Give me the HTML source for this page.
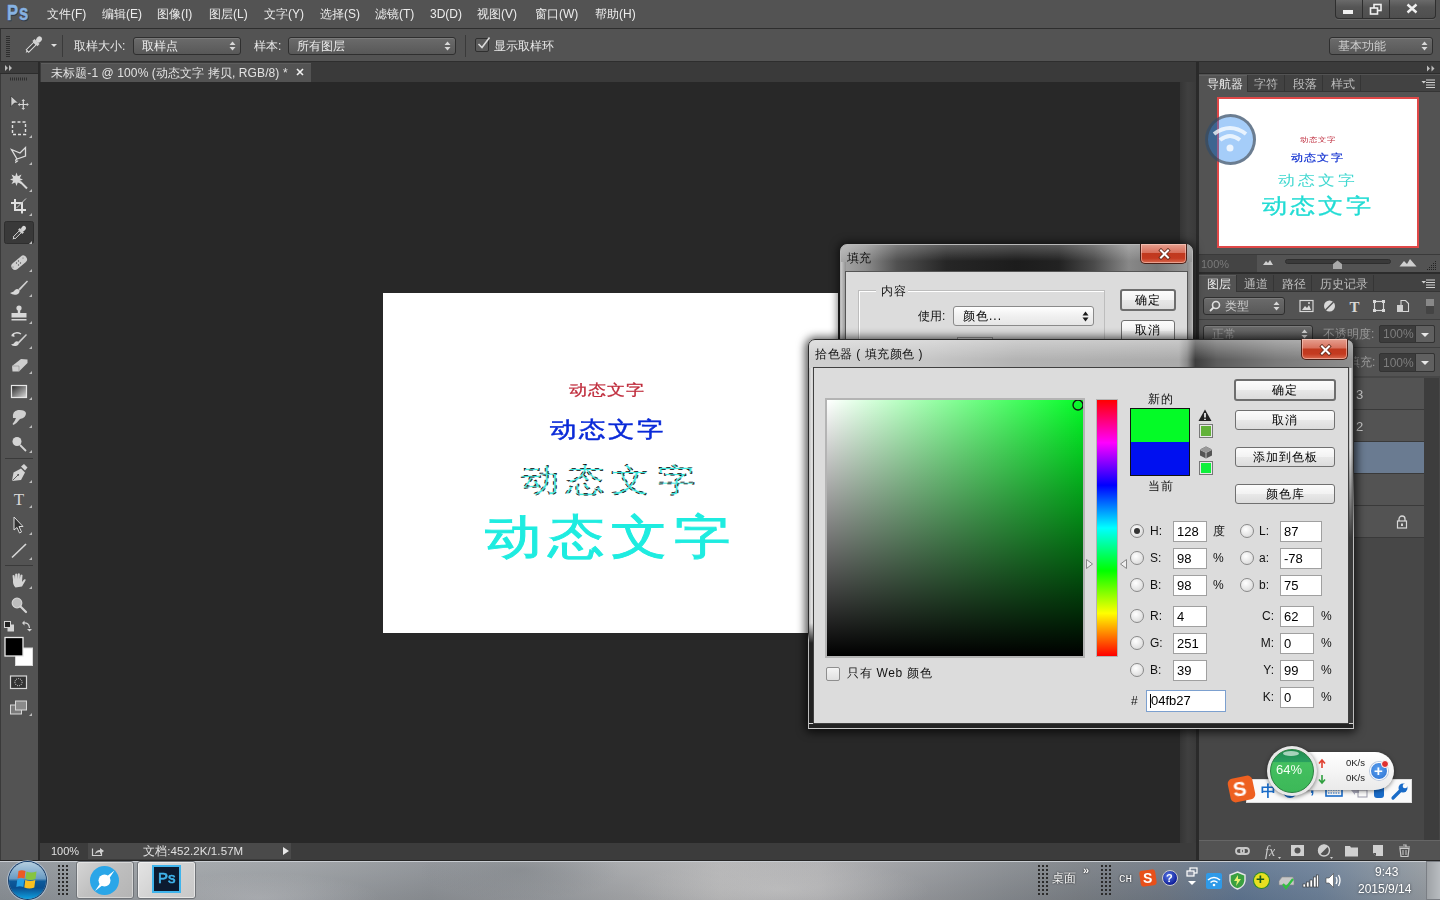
<!DOCTYPE html>
<html><head><meta charset="utf-8">
<style>
*{box-sizing:border-box;margin:0;padding:0}
html,body{width:1440px;height:900px;overflow:hidden;background:#282828;font-family:"Liberation Sans",sans-serif;font-size:12px;position:relative}
.a{position:absolute}
.t{position:absolute;white-space:nowrap;line-height:14px;will-change:transform}
span{will-change:transform}
#menubar{left:0;top:0;width:1440px;height:28px;background:#535353}
#menubar .t{color:#ececec;top:7px}
#optbar{left:0;top:28px;width:1440px;height:34px;background:#535353;border-top:1px solid #2e2e2e;border-bottom:1px solid #2e2e2e;border-left:1px solid #333}
#tools{left:0;top:62px;width:40px;height:798px;background:#535353;border-right:2px solid #2a2a2a;border-left:1px solid #3a3a3a}
#tabbar{left:40px;top:62px;width:1156px;height:20px;background:#3a3a3a}
#canvas-area{left:40px;top:82px;width:1140px;height:761px;background:#282828}
#vscroll{left:1180px;top:82px;width:16px;height:761px;background:linear-gradient(90deg,#353535,#404040 50%,#3a3a3a)}
#status{left:40px;top:843px;width:1156px;height:17px;background:#3c3c3c}
#rpanel{left:1196px;top:62px;width:244px;height:798px;background:#535353;border-left:3px solid #2a2a2a}
#taskbar{left:0;top:860px;width:1440px;height:40px;background:linear-gradient(90deg,#8a9096 0px,#9fa3a7 200px,#9a9ea2 300px,#8c9095 430px,#9a9da1 560px,#b3b3b4 720px,#aeaeb0 820px,#9a9ca0 900px,#878b90 1000px,#7a7f85 1080px,#6f7884 1160px,#5f7590 1240px,#6c8098 1320px,#8a949e 1400px,#9a9ea2 1440px)}
.dd{border:1px solid #2f2f2f;border-radius:3px;background:linear-gradient(#6b6b6b,#585858);box-shadow:inset 0 1px 0 #7a7a7a}
.dd span{position:absolute;left:8px;top:1px;color:#ececec;line-height:14px;white-space:nowrap}
.lr{left:1199px;width:225px;height:32px;background:#535353;border-bottom:1px solid #3a3a3a}
.cbtn{border:1px solid #4a2018;border-top:none;border-radius:0 0 5px 5px;background:linear-gradient(180deg,#e6a090 0%,#d8705c 45%,#c0391e 50%,#c43a20 75%,#d86a50 100%);box-shadow:inset 0 0 0 1px rgba(255,220,210,.5)}
.wbtn{border:1px solid #707070;border-radius:3px;background:linear-gradient(180deg,#fcfcfc 0%,#f2f2f2 50%,#e8e8e8 52%,#dcdcdc 100%)}
.wbtn.def{border:2px solid #6e6e6e}
.wbtn span{position:absolute;left:0;right:0;top:2px;text-align:center;color:#000;line-height:14px;font-size:12px;letter-spacing:1px}
.wdd{border:1px solid #8a8a8a;border-radius:3px;background:linear-gradient(180deg,#fff,#f0f0f0 50%,#e6e6e6)}
.wdd span{position:absolute;left:9px;top:2px;color:#000;line-height:14px;letter-spacing:1px}
.rad{width:14px;height:14px;border-radius:50%;border:1px solid #8a8a8a;background:radial-gradient(circle at 40% 35%,#fff,#e4e4e4 60%,#cfcfcf)}
.rad.on:after{content:"";position:absolute;left:3px;top:3px;width:6px;height:6px;border-radius:50%;background:#333}
.inp{border:1px solid #a0a0a0;background:#fff}
.inp span{position:absolute;left:3px;top:3px;color:#000;line-height:14px;font-size:13px}
.dots{background:linear-gradient(#333,#333) 0 0/2px 2px repeat;background-image:radial-gradient(circle at 1px 1px,#2a2a2a 1px,transparent 1.2px);background-size:4px 4px}
</style></head><body>
<div id="menubar" class="a">
  <svg class="a" style="left:0;top:0" width="40" height="28" viewBox="0 0 40 28"><g transform="translate(7,20.3) scale(0.76,1)"><text x="0.8" y="0.8" font-family="Liberation Sans" font-weight="bold" font-size="22" fill="#2c3644" letter-spacing="1.2" stroke="#2c3644" stroke-width="0.5">Ps</text><text x="0" y="0" font-family="Liberation Sans" font-weight="bold" font-size="22" fill="#86b2e2" letter-spacing="1.2" stroke="#86b2e2" stroke-width="0.5">Ps</text></g></svg>
  <div class="t" style="left:47px">文件(F)</div>
  <div class="t" style="left:102px">编辑(E)</div>
  <div class="t" style="left:157px">图像(I)</div>
  <div class="t" style="left:209px">图层(L)</div>
  <div class="t" style="left:264px">文字(Y)</div>
  <div class="t" style="left:320px">选择(S)</div>
  <div class="t" style="left:375px">滤镜(T)</div>
  <div class="t" style="left:430px">3D(D)</div>
  <div class="t" style="left:477px">视图(V)</div>
  <div class="t" style="left:535px">窗口(W)</div>
  <div class="t" style="left:595px">帮助(H)</div>
<div class="a" style="left:1335px;top:0;width:101px;height:19px;border:1px solid #2e2e2e;border-top:none;border-radius:0 0 4px 4px;background:linear-gradient(180deg,#6a6a6a,#555 40%,#4e4e4e);box-shadow:0 1px 0 #666"></div>
<div class="a" style="left:1362px;top:0;width:1px;height:18px;background:#2e2e2e"></div>
<div class="a" style="left:1389px;top:0;width:1px;height:18px;background:#2e2e2e"></div>
<div class="a" style="left:1343px;top:10px;width:10px;height:4px;background:#f0f0f0"></div>
<svg class="a" style="left:1369px;top:3px" width="14" height="13" viewBox="0 0 14 13"><rect x="5" y="1.5" width="7" height="6" fill="none" stroke="#f0f0f0" stroke-width="1.6"/><rect x="1.5" y="5" width="7" height="6" fill="#555" stroke="#f0f0f0" stroke-width="1.6"/></svg>
<svg class="a" style="left:1406px;top:3px" width="12" height="11" viewBox="0 0 12 11"><path d="M1.5 1.5 L10.5 9.5 M10.5 1.5 L1.5 9.5" stroke="#f0f0f0" stroke-width="2.4"/></svg>
</div>
<div id="optbar" class="a">
  <div class="a" style="left:5px;top:7px;width:4px;height:21px;background:repeating-linear-gradient(180deg,#2e2e2e 0 1px,transparent 1px 2px)"></div>
  <svg class="a" style="left:0;top:-28px" width="60" height="90" viewBox="0 0 60 90"><g transform="translate(32.5,44) rotate(45)"><rect x="-2.6" y="-11" width="5.2" height="6.5" rx="2.6" fill="#d6d6d6"/><rect x="-3.6" y="-5" width="7.2" height="3" fill="#cfcfcf"/><rect x="-1.7" y="-2" width="3.4" height="10.5" fill="#454545" stroke="#dcdcdc" stroke-width="1"/><path d="M-1.2 8.5 L0 11 L1.2 8.5Z" fill="#dcdcdc"/></g></svg>
  <div class="a" style="left:50px;top:15px;width:0;height:0;border-left:3px solid transparent;border-right:3px solid transparent;border-top:3px solid #e0e0e0"></div>
  <div class="a" style="left:61px;top:6px;width:1px;height:22px;background:#3a3a3a"></div>
  <div class="t" style="left:73px;top:10px;color:#e8e8e8">取样大小:</div>
  <div class="a dd" style="left:132px;top:8px;width:108px;height:18px"><span>取样点</span><svg style="position:absolute;right:4px;top:3px" width="7" height="10" viewBox="0 0 7 10"><path d="M0.5 4 L3.5 0.5 L6.5 4Z M0.5 6 L3.5 9.5 L6.5 6Z" fill="#d8d8d8"/></svg></div>
  <div class="t" style="left:253px;top:10px;color:#e8e8e8">样本:</div>
  <div class="a dd" style="left:287px;top:8px;width:168px;height:18px"><span>所有图层</span><svg style="position:absolute;right:4px;top:3px" width="7" height="10" viewBox="0 0 7 10"><path d="M0.5 4 L3.5 0.5 L6.5 4Z M0.5 6 L3.5 9.5 L6.5 6Z" fill="#d8d8d8"/></svg></div>
  <div class="a" style="left:464px;top:6px;width:1px;height:22px;background:#3a3a3a"></div>
  <div class="a" style="left:474px;top:9px;width:14px;height:14px;border:1px solid #2f2f2f;border-radius:2px;background:#5a5a5a"></div>
  <svg class="a" style="left:475px;top:7px" width="16" height="14" viewBox="0 0 16 14"><path d="M2.5 8 L6 11.5 L13.5 1.5" stroke="#dadada" stroke-width="1.6" fill="none"/></svg>
  <div class="t" style="left:493px;top:10px;color:#e8e8e8">显示取样环</div>
  <div class="a dd" style="left:1328px;top:8px;width:104px;height:18px;color:#c8c8c8"><span style="color:#cfcfcf">基本功能</span><svg style="position:absolute;right:4px;top:3px" width="7" height="10" viewBox="0 0 7 10"><path d="M0.5 4 L3.5 0.5 L6.5 4Z M0.5 6 L3.5 9.5 L6.5 6Z" fill="#d8d8d8"/></svg></div>
</div>
<div id="tools" class="a"></div>
<div class="a" style="left:0;top:62px;width:38px;height:12px;background:#3b3b3b;border-bottom:1px solid #2c2c2c"></div>
<svg class="a" style="left:0;top:0" width="40" height="860" viewBox="0 0 40 860">
<path d="M5 65 L8 68 L5 71Z M9 65 L12 68 L9 71Z" fill="#bdbdbd"/>
<path d="M10 79 h18" stroke="#2f2f2f" stroke-width="3" stroke-dasharray="1 1"/>
<rect x="4.5" y="221.5" width="29" height="22" rx="2" fill="#393939" stroke="#2e2e2e"/>
<g fill="#cfcfcf" stroke="none">
<!-- move -->
<path d="M11 96 L18.5 103 L14.5 103 L11 106.5Z" stroke="#2a2a2a" stroke-width="0.6"/>
<path d="M23.3 100 v9 M18.8 104.5 h9" stroke="#d8d8d8" stroke-width="1.2"/>
<path d="M23.3 99 l-1.8 2 h3.6Z M23.3 110 l-1.8 -2 h3.6Z M17.8 104.5 l2 -1.8 v3.6Z M28.8 104.5 l-2 -1.8 v3.6Z"/>
</g>
<!-- marquee -->
<rect x="12.5" y="122" width="13" height="12.5" fill="none" stroke="#e0e0e0" stroke-width="1.4" stroke-dasharray="3 2"/>
<!-- lasso -->
<path d="M11.5 149.5 L20 153 L25.5 147.5 L25.5 156 L17 159 Z" fill="none" stroke="#dcdcdc" stroke-width="1.3"/>
<path d="M17 159 q-2 1 -1 2 q1 1 2 -0.5 M16.5 161 L15.5 163" fill="none" stroke="#dcdcdc" stroke-width="1.2"/>
<!-- wand -->
<path d="M16.5 172.5 L17.8 176.2 L21.5 174.5 L19.8 178.3 L23 179.5 L19.8 180.7 L21.5 184 L17.8 182.5 L16.5 186 L15.2 182.5 L11.5 184 L13.2 180.7 L10 179.5 L13.2 178.3 L11.5 174.5 L15.2 176.2Z" fill="#d8d8d8"/>
<path d="M20 181.5 L27 188.5" stroke="#d8d8d8" stroke-width="2"/>
<!-- crop -->
<path d="M11 203 H22 V213.5 M15 199 V210 H26" fill="none" stroke="#e0e0e0" stroke-width="2"/>
<path d="M16.5 208 L26 198.5" stroke="#d0d0d0" stroke-width="1"/>
<!-- eyedropper --><g transform="translate(19,233) rotate(45) scale(.82)"><rect x="-2.6" y="-11" width="5.2" height="6.5" rx="2.6" fill="#d6d6d6"/><rect x="-3.6" y="-5" width="7.2" height="3" fill="#cfcfcf"/><rect x="-1.7" y="-2" width="3.4" height="10.5" fill="#454545" stroke="#dcdcdc" stroke-width="1"/><path d="M-1.2 8.5 L0 11 L1.2 8.5Z" fill="#dcdcdc"/></g><!-- healing -->
<rect x="10" y="259" width="18" height="7.5" rx="3.7" transform="rotate(-40 19 262.5)" fill="#cfcfcf"/>
<g fill="#555"><circle cx="18.5" cy="261" r=".7"/><circle cx="20.5" cy="263" r=".7"/><circle cx="16.5" cy="263" r=".7"/><circle cx="18.5" cy="265" r=".7"/><circle cx="23" cy="258" r=".5"/><circle cx="13" cy="267" r=".5"/></g>
<!-- brush -->
<path d="M18.5 289 L27 280.5 L28 281.5 L19.8 290.5Z" fill="#d0d0d0"/>
<path d="M10 293 Q14 292 15 290 Q17 288 19.5 290 Q20 293 17 294.5 Q13 295.5 10 293Z" fill="#d8d8d8"/>
<!-- stamp -->
<circle cx="19" cy="308" r="2.6" fill="#d8d8d8"/><path d="M17.8 309 h2.4 v4 h-2.4Z M11.5 313 h15 v4.5 h-15Z M11.5 319 h15 v1.5 h-15Z" fill="#d8d8d8"/>
<!-- history brush -->
<path d="M12 335 Q16 331 21 334" fill="none" stroke="#d8d8d8" stroke-width="1.4"/><path d="M11 336 L14 333 L14.5 337Z" fill="#d8d8d8"/>
<path d="M18 342 L26 334 L27 335 L19 343.5Z" fill="#d0d0d0"/><path d="M11 344.5 Q14 344 15 342 Q17 340.5 19 342.5 Q19 345 16 346 Q13 346.5 11 344.5Z" fill="#d8d8d8"/>
<!-- eraser -->
<path d="M12 366 L21 359 L27.5 359.5 L27.5 363 L19 371.5 L12.5 371.5Z" fill="#cfcfcf"/><path d="M12 366 h7 v5.5" stroke="#8a8a8a" stroke-width=".6" fill="none"/>
<!-- gradient -->
<defs><linearGradient id="gr" x1="0" x2="1" y1="0" y2="1"><stop offset="0" stop-color="#222"/><stop offset="1" stop-color="#ddd"/></linearGradient>
<linearGradient id="sw" x1="0" x2="1" y1="0" y2="1"><stop offset="0" stop-color="#9a9a9a"/><stop offset="1" stop-color="#7a7a7a"/></linearGradient></defs>
<rect x="11.5" y="385.5" width="15" height="12" fill="url(#gr)" stroke="#e6e6e6" stroke-width="1.2"/>
<!-- smudge -->
<path d="M13 418 Q12 411 18 410 Q25 409.5 26 413 Q26 418 20 419 Q17 423 13.5 425 L12.5 424 Q15 421 16 418Z" fill="#d0d0d0"/>
<!-- dodge -->
<circle cx="17" cy="441.5" r="4.5" fill="#d4d4d4"/><path d="M20 445 L26 451" stroke="#d4d4d4" stroke-width="1.8"/>
<path d="M5 458.5 H33" stroke="#3a3a3a" stroke-width="1"/>
<!-- pen -->
<path d="M12 481 L13.5 472.5 L21 468.5 L25 472.5 L21 480Z" fill="#d4d4d4"/><path d="M21 466.5 L24 464 L27.5 467.5 L25 470.5Z" fill="#d4d4d4"/><path d="M12.5 480.5 L18 475" stroke="#444" stroke-width=".8"/><circle cx="18.2" cy="474.8" r=".9" fill="#444"/>
<!-- type -->
<text x="19" y="505" font-family="Liberation Serif" font-size="17" fill="#d8d8d8" text-anchor="middle">T</text>
<!-- path select -->
<path d="M14 517 L14 530 L17 527.5 L19.5 533 L21.5 532 L19 526.5 L23 526.5Z" fill="#333" stroke="#dcdcdc" stroke-width="1"/>
<!-- line -->
<path d="M12 557.5 L26 544" stroke="#d8d8d8" stroke-width="1.6"/>
<path d="M5 565.5 H33" stroke="#3a3a3a" stroke-width="1"/>
<!-- hand -->
<path d="M13 580 L12.5 575.5 Q13.5 574.5 14.5 575.5 L15 579 L15.2 574 Q16.2 573 17.2 574 L17.4 579 L17.8 573.8 Q18.8 572.8 19.8 573.8 L19.8 579 L20.5 575 Q21.5 574 22.5 575 L22 582 Q23.5 579.5 25 579 Q26 579.5 25.5 580.5 L22 586.5 L15.5 587.5 Q12.5 585 13 580Z" fill="#d4d4d4"/>
<!-- zoom -->
<circle cx="17" cy="603" r="4.8" fill="#bdbdbd" stroke="#d4d4d4" stroke-width="1.2"/><path d="M20.5 606.5 L26 612" stroke="#d4d4d4" stroke-width="2.2" stroke-linecap="round"/>
<!-- default colors -->
<rect x="7.5" y="624.5" width="6.5" height="7" fill="#d4d4d4"/><rect x="4.5" y="621.5" width="6" height="6" fill="#222" stroke="#d4d4d4" stroke-width="1"/>
<path d="M23 623 Q29 622 29.5 628" fill="none" stroke="#d4d4d4" stroke-width="1.2"/><path d="M22 623 L24.5 620.5 L24.5 625.5Z M29.5 631.5 L27 629 L32 629Z" fill="#d4d4d4"/>
<!-- fg/bg -->
<rect x="15.5" y="648" width="17" height="17.5" fill="#fff" stroke="#d8d8d8" stroke-width="1"/>
<rect x="5" y="637.5" width="18" height="18.5" fill="#000" stroke="#e8e8e8" stroke-width="1.3"/>
<!-- quick mask -->
<rect x="10.5" y="676" width="16" height="12.5" fill="#333" stroke="#d8d8d8" stroke-width="1.2"/><circle cx="18.5" cy="682.2" r="3.6" fill="none" stroke="#e6e6e6" stroke-width="1" stroke-dasharray="1 1"/>
<!-- screen mode -->
<rect x="10.5" y="705" width="11" height="9" fill="#7a7a7a" stroke="#d8d8d8" stroke-width="1"/><rect x="15.5" y="701" width="11" height="9" fill="#8a8a8a" stroke="#d8d8d8" stroke-width="1"/>
<path d="M29 138 L32 135 L32 138Z" fill="#bdbdbd"/><path d="M29 165 L32 162 L32 165Z" fill="#bdbdbd"/><path d="M29 192 L32 189 L32 192Z" fill="#bdbdbd"/><path d="M29 216 L32 213 L32 216Z" fill="#bdbdbd"/><path d="M29 244 L32 241 L32 244Z" fill="#bdbdbd"/><path d="M29 272 L32 269 L32 272Z" fill="#bdbdbd"/><path d="M29 297 L32 294 L32 297Z" fill="#bdbdbd"/><path d="M29 324 L32 321 L32 324Z" fill="#bdbdbd"/><path d="M29 349 L32 346 L32 349Z" fill="#bdbdbd"/><path d="M29 374 L32 371 L32 374Z" fill="#bdbdbd"/><path d="M29 400 L32 397 L32 400Z" fill="#bdbdbd"/><path d="M29 428 L32 425 L32 428Z" fill="#bdbdbd"/><path d="M29 453 L32 450 L32 453Z" fill="#bdbdbd"/><path d="M29 483 L32 480 L32 483Z" fill="#bdbdbd"/><path d="M29 508 L32 505 L32 508Z" fill="#bdbdbd"/><path d="M29 535 L32 532 L32 535Z" fill="#bdbdbd"/><path d="M29 560 L32 557 L32 560Z" fill="#bdbdbd"/><path d="M29 589 L32 586 L32 589Z" fill="#bdbdbd"/><path d="M29 716 L32 713 L32 716Z" fill="#bdbdbd"/></svg>
<div id="tabbar" class="a"></div>
<div class="a" style="left:41px;top:63px;width:270px;height:19px;background:#535353;border-top:1px solid #5e5e5e"></div>
<div class="t" style="left:51px;top:66px;color:#e2e2e2;letter-spacing:0.1px">未标题-1 @ 100% (动态文字 拷贝, RGB/8) *</div>
<svg class="a" style="left:296px;top:68px" width="8" height="8" viewBox="0 0 8 8"><path d="M1 1 L7 7 M7 1 L1 7" stroke="#f0f0f0" stroke-width="1.6"/></svg>
<div id="canvas-area" class="a"></div>
<div class="a" style="left:383px;top:293px;width:455px;height:340px;background:#fff"></div>
<div class="t cj" style="left:569px;top:381px;font-size:15px;line-height:18px;letter-spacing:0.9px;color:#bf2b3b;-webkit-text-stroke:0.3px #bf2b3b;transform:scaleX(1.2);transform-origin:0 0">动态文字</div>
<div class="t cj" style="left:550px;top:418px;font-size:22px;line-height:24px;letter-spacing:2.2px;color:#0a2ad8;-webkit-text-stroke:0.5px #0a2ad8;transform:scaleX(1.2);transform-origin:0 0">动态文字</div>
<svg class="a" style="left:500px;top:450px" width="220" height="60" viewBox="0 0 220 60"><g transform="translate(21,0) scale(1.2,1)"><text x="0" y="41" font-family="Liberation Sans" font-size="31.5" font-weight="500" letter-spacing="6" fill="#3ee6dc" stroke="#fff" stroke-width="0.6">动态文字</text><text x="0" y="41" font-family="Liberation Sans" font-size="31.5" font-weight="500" letter-spacing="6" fill="none" stroke="#000" stroke-width="0.75" stroke-dasharray="3.5 3.5">动态文字</text></g></svg>
<div class="t cj" style="left:485px;top:511.5px;font-size:47px;line-height:50px;letter-spacing:5.5px;color:#1eece0;-webkit-text-stroke:0.9px #1eece0;transform:scaleX(1.2);transform-origin:0 0">动态文字</div>
<div id="vscroll" class="a"></div>
<div id="status" class="a"></div>
<div class="a" style="left:88px;top:843px;width:203px;height:16px;background:#4a4a4a"></div>
<div class="t" style="left:51px;top:844px;color:#e0e0e0;font-size:11px">100%</div>
<svg class="a" style="left:91px;top:845px" width="14" height="12" viewBox="0 0 14 12"><path d="M1.5 3.5 v7 h9 v-3" fill="none" stroke="#d0d0d0" stroke-width="1.2"/><path d="M4 9 Q5 5 9 5 V3 L13 6 L9 9 V7 Q6 7 4 9Z" fill="#d0d0d0"/></svg>
<div class="t" style="left:143px;top:844px;color:#e0e0e0;font-size:11.5px;letter-spacing:0.1px">文档:452.2K/1.57M</div>
<div class="a" style="left:283px;top:847px;width:0;height:0;border-top:4.5px solid transparent;border-bottom:4.5px solid transparent;border-left:6px solid #e8e8e8"></div>
<div id="rpanel" class="a"></div>
<div id="rpanel" class="a"></div>
<div class="a" style="left:1199px;top:62px;width:241px;height:12px;background:#3b3b3b;border-bottom:1px solid #2c2c2c"></div>
<svg class="a" style="left:1426px;top:65px" width="10" height="7" viewBox="0 0 10 7"><path d="M1 0.5 L4 3.5 L1 6.5Z M5.5 0.5 L8.5 3.5 L5.5 6.5Z" fill="#bdbdbd"/></svg>
<!-- nav tabs -->
<div class="a" style="left:1199px;top:75px;width:241px;height:17px;background:#424242;border-bottom:1px solid #353535"></div>
<div class="a" style="left:1199px;top:75px;width:48px;height:18px;background:#535353;border-top:1px solid #5f5f5f"></div>
<div class="a" style="left:1284px;top:75px;width:1px;height:17px;background:#353535"></div>
<div class="a" style="left:1322px;top:75px;width:1px;height:17px;background:#353535"></div>
<div class="a" style="left:1360px;top:75px;width:1px;height:17px;background:#353535"></div>
<div class="a" style="left:1247px;top:75px;width:1px;height:17px;background:#353535"></div>
<div class="t" style="left:1207px;top:77px;color:#ececec">导航器</div>
<div class="t" style="left:1254px;top:77px;color:#bdbdbd">字符</div>
<div class="t" style="left:1293px;top:77px;color:#bdbdbd">段落</div>
<div class="t" style="left:1331px;top:77px;color:#bdbdbd">样式</div>
<svg class="a" style="left:1421px;top:79px" width="15" height="9" viewBox="0 0 15 9"><path d="M0.5 2 H5 L2.75 4.5Z" fill="#d0d0d0"/><path d="M5 1 H14 M5 3.5 H14 M5 6 H14 M5 8.5 H14" stroke="#d0d0d0" stroke-width="1.1"/></svg>
<!-- nav preview -->
<div class="a" style="left:1217px;top:97px;width:202px;height:151px;background:#fff;border:2px solid #e04848"></div>
<div class="t cj" style="left:1299.6px;top:135.5px;font-size:6.7px;line-height:8px;letter-spacing:0.4px;color:#c03040;transform:scaleX(1.2);transform-origin:0 0">动态文字</div>
<div class="t cj" style="left:1291px;top:152px;font-size:9.8px;line-height:11px;letter-spacing:1px;color:#1030d0;-webkit-text-stroke:.2px #1030d0;transform:scaleX(1.2);transform-origin:0 0">动态文字</div>
<div class="t cj" style="left:1278px;top:171.5px;font-size:14px;line-height:16px;letter-spacing:2.6px;color:#40d8d0;transform:scaleX(1.2);transform-origin:0 0">动态文字</div>
<div class="t cj" style="left:1262.3px;top:193.5px;font-size:20.9px;line-height:23px;letter-spacing:2.4px;color:#22dcd4;-webkit-text-stroke:.3px #22dcd4;transform:scaleX(1.2);transform-origin:0 0">动态文字</div>
<!-- wifi bubble -->
<div class="a" style="left:1205px;top:114px;width:51px;height:51px;border-radius:50%;background:rgba(30,130,240,.4);border:3px solid rgba(60,60,60,.55)"></div>
<svg class="a" style="left:1210px;top:124px" width="40" height="30" viewBox="0 0 40 30"><path d="M4 10 Q20 -2 36 10" fill="none" stroke="rgba(255,255,255,.75)" stroke-width="4"/><path d="M10 16 Q20 8 30 16" fill="none" stroke="rgba(255,255,255,.75)" stroke-width="4"/><circle cx="20" cy="24" r="3.5" fill="rgba(255,255,255,.8)"/></svg>
<!-- zoom row -->
<div class="a" style="left:1199px;top:254px;width:241px;height:1px;background:#3a3a3a"></div>
<div class="a" style="left:1199px;top:255px;width:58px;height:17px;background:#444"></div>
<div class="t" style="left:1201px;top:257px;color:#7a7a7a;font-size:11px">100%</div>
<svg class="a" style="left:1262px;top:258px" width="12" height="8" viewBox="0 0 12 8"><path d="M1 7 L4 3 L6 5 L8 2 L11 7Z" fill="#cfcfcf"/></svg>
<div class="a" style="left:1285px;top:259px;width:106px;height:5px;border-radius:3px;background:#3a3a3a;border:1px solid #2e2e2e"></div>
<svg class="a" style="left:1332px;top:260px" width="11" height="10" viewBox="0 0 11 10"><path d="M1 4 L5.5 0.5 L10 4 V9 H1Z" fill="#a9a9a9"/></svg>
<svg class="a" style="left:1399px;top:258px" width="18" height="9" viewBox="0 0 18 9"><path d="M0.5 8.5 L5 3 L8 6 L11 1 L17.5 8.5Z" fill="#cfcfcf"/></svg>
<svg class="a" style="left:1427px;top:261px" width="10" height="10" viewBox="0 0 10 10"><rect x="0" y="8" width="1" height="1" fill="#222"/><rect x="2" y="6" width="1" height="1" fill="#222"/><rect x="2" y="8" width="1" height="1" fill="#222"/><rect x="4" y="4" width="1" height="1" fill="#222"/><rect x="4" y="6" width="1" height="1" fill="#222"/><rect x="4" y="8" width="1" height="1" fill="#222"/><rect x="6" y="2" width="1" height="1" fill="#222"/><rect x="6" y="4" width="1" height="1" fill="#222"/><rect x="6" y="6" width="1" height="1" fill="#222"/><rect x="6" y="8" width="1" height="1" fill="#222"/><rect x="8" y="0" width="1" height="1" fill="#222"/><rect x="8" y="2" width="1" height="1" fill="#222"/><rect x="8" y="4" width="1" height="1" fill="#222"/><rect x="8" y="6" width="1" height="1" fill="#222"/><rect x="8" y="8" width="1" height="1" fill="#222"/></svg>
<div class="a" style="left:1199px;top:272px;width:241px;height:2px;background:#2c2c2c"></div>
<!-- layers tabs -->
<div class="a" style="left:1199px;top:274px;width:241px;height:18px;background:#424242;border-bottom:1px solid #353535"></div>
<div class="a" style="left:1199px;top:275px;width:37px;height:17px;background:#535353;border-top:1px solid #5f5f5f"></div>
<div class="a" style="left:1236px;top:275px;width:1px;height:17px;background:#353535"></div>
<div class="a" style="left:1273px;top:275px;width:1px;height:17px;background:#353535"></div>
<div class="a" style="left:1311px;top:275px;width:1px;height:17px;background:#353535"></div>
<div class="a" style="left:1373px;top:275px;width:1px;height:17px;background:#353535"></div>
<div class="t" style="left:1207px;top:277px;color:#ececec">图层</div>
<div class="t" style="left:1244px;top:277px;color:#bdbdbd">通道</div>
<div class="t" style="left:1282px;top:277px;color:#bdbdbd">路径</div>
<div class="t" style="left:1320px;top:277px;color:#bdbdbd">历史记录</div>
<svg class="a" style="left:1421px;top:279px" width="15" height="9" viewBox="0 0 15 9"><path d="M0.5 2 H5 L2.75 4.5Z" fill="#d0d0d0"/><path d="M5 1 H14 M5 3.5 H14 M5 6 H14 M5 8.5 H14" stroke="#d0d0d0" stroke-width="1.1"/></svg>
<!-- filter row -->
<div class="a dd" style="left:1203px;top:297px;width:82px;height:18px"><span style="left:21px;color:#cfcfcf">类型</span><svg style="position:absolute;right:4px;top:3px" width="7" height="10" viewBox="0 0 7 10"><path d="M0.5 4 L3.5 0.5 L6.5 4Z M0.5 6 L3.5 9.5 L6.5 6Z" fill="#d8d8d8"/></svg></div>
<svg class="a" style="left:1209px;top:300px" width="12" height="12" viewBox="0 0 12 12"><circle cx="7" cy="5" r="3.5" fill="none" stroke="#e0e0e0" stroke-width="1.6"/><path d="M4.5 7.5 L1 11" stroke="#e0e0e0" stroke-width="1.8"/></svg>
<svg class="a" style="left:1298px;top:298px" width="140" height="18" viewBox="1298 298 140 18">
<rect x="1300" y="300.5" width="13" height="11" fill="none" stroke="#d8d8d8" stroke-width="1.2"/><path d="M1302 310 L1305 306 L1307 308 L1309 305 L1311 310Z" fill="#d8d8d8"/><circle cx="1309" cy="303" r="1" fill="#d8d8d8"/>
<circle cx="1329.5" cy="306" r="5.5" fill="#d8d8d8"/><path d="M1325.5 310 L1333.5 302" stroke="#535353" stroke-width="1.4"/>
<text x="1354.5" y="312" font-family="Liberation Serif" font-size="15" font-weight="bold" fill="#d8d8d8" text-anchor="middle">T</text>
<rect x="1374.5" y="301.5" width="9" height="9" fill="none" stroke="#d8d8d8" stroke-width="1.2"/><g fill="#d8d8d8"><rect x="1373" y="300" width="3" height="3"/><rect x="1382" y="300" width="3" height="3"/><rect x="1373" y="309" width="3" height="3"/><rect x="1382" y="309" width="3" height="3"/></g>
<path d="M1401 300.5 h4.5 l3 3 v8 h-7.5Z" fill="none" stroke="#d8d8d8" stroke-width="1.1"/><rect x="1397" y="305" width="6" height="7" fill="#cfcfcf"/>
<rect x="1426" y="299" width="8" height="15" rx="1" fill="#444"/><rect x="1426" y="299" width="8" height="7" fill="#888"/>
</svg>
<div class="a" style="left:1199px;top:319px;width:241px;height:1px;background:#3f3f3f"></div>
<div class="a dd" style="left:1203px;top:325px;width:110px;height:17px"><span style="left:8px;color:#9a9a9a">正常</span><svg style="position:absolute;right:4px;top:3px" width="7" height="10" viewBox="0 0 7 10"><path d="M0.5 4 L3.5 0.5 L6.5 4Z M0.5 6 L3.5 9.5 L6.5 6Z" fill="#d8d8d8"/></svg></div>
<div class="t" style="left:1323px;top:327px;color:#9a9a9a">不透明度:</div>
<div class="a" style="left:1379px;top:325px;width:56px;height:18px;background:#3c3c3c;border:1px solid #333;border-radius:2px"></div>
<div class="a" style="left:1415px;top:325px;width:20px;height:18px;background:#606060;border:1px solid #333;border-radius:0 2px 2px 0"></div>
<div class="t" style="left:1383px;top:327px;color:#7d7d7d">100%</div>
<div class="a" style="left:1421px;top:333px;border-left:4px solid transparent;border-right:4px solid transparent;border-top:4px solid #e8e8e8"></div>
<div class="a" style="left:1199px;top:347px;width:241px;height:1px;background:#3f3f3f"></div>
<div class="t" style="left:1348px;top:355px;color:#9a9a9a">填充:</div>
<div class="a" style="left:1379px;top:353px;width:56px;height:19px;background:#3c3c3c;border:1px solid #333;border-radius:2px"></div>
<div class="a" style="left:1415px;top:353px;width:20px;height:19px;background:#606060;border:1px solid #333;border-radius:0 2px 2px 0"></div>
<div class="t" style="left:1383px;top:356px;color:#7d7d7d">100%</div>
<div class="a" style="left:1421px;top:361px;border-left:4px solid transparent;border-right:4px solid transparent;border-top:4px solid #e8e8e8"></div>
<!-- layer list -->
<div class="a" style="left:1199px;top:376px;width:241px;height:464px;background:#474747"></div>
<div class="a" style="left:1424px;top:378px;width:15px;height:462px;background:#3d3d3d"></div>
<div class="a lr" style="top:378px"></div>
<div class="a lr" style="top:410px"></div>
<div class="a lr" style="top:442px;background:#6a7b91"></div>
<div class="a lr" style="top:474px"></div>
<div class="a lr" style="top:506px"></div>
<div class="t" style="left:1356px;top:388px;color:#cfcfcf;font-size:13px">3</div>
<div class="t" style="left:1356px;top:420px;color:#cfcfcf;font-size:13px">2</div>
<svg class="a" style="left:1396px;top:515px" width="12" height="14" viewBox="0 0 12 14"><path d="M3 6 V4 A3 3 0 0 1 9 4 V6" fill="none" stroke="#d8d8d8" stroke-width="1.3"/><rect x="1.5" y="6" width="9" height="7" fill="none" stroke="#d8d8d8" stroke-width="1.2"/><rect x="5" y="8.5" width="2" height="2.5" fill="#d8d8d8"/></svg>

<!-- sogou bar -->
<div class="a" style="left:1246px;top:779px;width:166px;height:24px;background:#fafafa;border:1px solid #ddd"></div>
<div class="a" style="left:1229px;top:777px;width:25px;height:24px;border-radius:5px;background:#ee6020;transform:rotate(-12deg)"></div>
<div class="t" style="left:1233px;top:777px;color:#fff;font-size:20px;font-weight:bold;line-height:24px;transform:rotate(-8deg)">S</div>
<div class="t" style="left:1261px;top:783px;color:#1a6cc8;font-size:15px;font-weight:bold;line-height:16px">中</div>
<div class="a" style="left:1283px;top:788px;width:14px;height:10px;border-radius:0 0 7px 7px;background:#1a6cc8"></div>
<div class="t" style="left:1310px;top:780px;color:#1a6cc8;font-size:16px;font-weight:bold;line-height:16px">,</div>
<svg class="a" style="left:1325px;top:786px" width="18" height="12" viewBox="0 0 18 12"><rect x="1" y="1" width="16" height="9" fill="none" stroke="#1a6cc8" stroke-width="1.6"/><path d="M3 4 h12 M3 7 h12" stroke="#1a6cc8" stroke-dasharray="1.5 1"/></svg>
<svg class="a" style="left:1350px;top:786px" width="18" height="12" viewBox="0 0 18 12"><path d="M1 4 L5 1 V3 H9 V7 H5 V9Z" fill="#aab"/><rect x="8" y="4" width="9" height="7" fill="none" stroke="#99a" stroke-width="1"/></svg>
<div class="a" style="left:1374px;top:785px;width:10px;height:13px;border-radius:0 0 3px 3px;background:#1a6cc8"></div>
<svg class="a" style="left:1390px;top:781px" width="20" height="20" viewBox="0 0 20 20"><path d="M3 17 L10 10" stroke="#1a6cc8" stroke-width="3.2" stroke-linecap="round"/><circle cx="13" cy="7" r="4.5" fill="#1a6cc8"/><circle cx="15" cy="5" r="2.3" fill="#fafafa"/></svg>
<!-- 360 widget -->
<div class="a" style="left:1290px;top:752px;width:104px;height:38px;border-radius:19px;background:linear-gradient(180deg,#fff,#eaeaea);box-shadow:0 1px 4px rgba(0,0,0,.5)"></div>
<div class="a" style="left:1267px;top:746px;width:50px;height:50px;border-radius:50%;background:#e8e8e8;box-shadow:0 1px 4px rgba(0,0,0,.5)"></div>
<div class="a" style="left:1270px;top:749px;width:44px;height:44px;border-radius:50%;background:linear-gradient(180deg,#1e8a50 0%,#2aa060 28%,#44c060 30%,#3cb858 100%);border:1px solid #2a8040"></div>
<div class="a" style="left:1283px;top:751px;width:16px;height:5px;border-radius:50%;background:rgba(255,255,255,.6)"></div>
<div class="t" style="left:1276px;top:763px;color:#f4fff4;font-size:13px;line-height:14px">64%</div>
<svg class="a" style="left:1318px;top:758px" width="8" height="28" viewBox="0 0 8 28"><path d="M4 10 V3 M1 5.5 L4 2 L7 5.5" stroke="#e04030" stroke-width="1.6" fill="none"/><path d="M4 17 V24 M1 21.5 L4 25 L7 21.5" stroke="#30a040" stroke-width="1.6" fill="none"/></svg>
<div class="t" style="left:1346px;top:757px;color:#222;font-size:9.5px;line-height:12px">0K/s</div>
<div class="t" style="left:1346px;top:772px;color:#222;font-size:9.5px;line-height:12px">0K/s</div>
<div class="a" style="left:1370px;top:762px;width:18px;height:18px;border-radius:50%;background:radial-gradient(circle at 45% 40%,#5aa0f0,#2a70d0);border:1px solid #fff;box-shadow:0 0 0 1px #b8c8e0"></div>
<div class="t" style="left:1374px;top:763px;color:#fff;font-size:15px;font-weight:bold;line-height:16px">+</div>
<div class="a" style="left:1381px;top:760px;width:8px;height:8px;border-radius:50%;background:#e03030;border:1px solid #fff"></div>
<!-- footer -->
<div class="a" style="left:1199px;top:840px;width:241px;height:20px;background:#535353;border-top:1px solid #666"></div>
<svg class="a" style="left:1230px;top:842px" width="190" height="18" viewBox="1230 842 190 18">
<g fill="none" stroke="#c8c8c8" stroke-width="1.8"><rect x="1236" y="848" width="8" height="6" rx="3"/><rect x="1241" y="848" width="8" height="6" rx="3"/></g>
<text x="1265" y="856" font-family="Liberation Serif" font-style="italic" font-size="14" fill="#cfcfcf">fx</text><path d="M1278 857 h3 l-1.5 2Z" fill="#cfcfcf"/>
<rect x="1291" y="845" width="13" height="11" fill="#d0d0d0"/><circle cx="1297.5" cy="850.5" r="3" fill="#535353"/>
<circle cx="1324" cy="850.5" r="5.5" fill="none" stroke="#d0d0d0" stroke-width="1.4"/><path d="M1320 854.5 L1328 846.5 A5.5 5.5 0 0 0 1320 854.5Z" fill="#d0d0d0"/><path d="M1330 857 h3 l-1.5 2Z" fill="#cfcfcf"/>
<path d="M1345 846 h5 l1 1.5 h7 v9 h-13Z" fill="#d0d0d0"/>
<path d="M1373 845 h10 v11 h-7 l-3 -3Z" fill="#d0d0d0"/><path d="M1373 853 h3 v3" fill="#535353"/>
<path d="M1399 847 h11 M1403 845 h3 v2" fill="none" stroke="#c8c8c8" stroke-width="1.2"/><path d="M1400 848.5 h9 l-1 8 h-7Z" fill="none" stroke="#c8c8c8" stroke-width="1.2"/><path d="M1403 850 v5 M1406 850 v5" stroke="#c8c8c8"/>
</svg>


<!-- FILL DIALOG -->
<div class="a" style="left:840px;top:244px;width:353px;height:100px;border-radius:7px 7px 0 0;border:1px solid #b8b8b8;box-shadow:0 0 8px 2px rgba(0,0,0,.6);background:linear-gradient(90deg,#a8a8a8 0%,#8c8c8c 7%,#505050 16%,#262626 30%,#1c1c1c 50%,#222 62%,#4a4a4a 72%,#888 82%,#777 90%,#9a9a9a 100%)"></div>
<div class="a" style="left:841px;top:245px;width:351px;height:27px;border-radius:6px 6px 0 0;background:linear-gradient(180deg,rgba(255,255,255,.25),rgba(255,255,255,0) 60%)"></div>
<div class="a" style="left:841px;top:262px;width:5px;height:80px;background:linear-gradient(90deg,#c8c8c8,#909090)"></div>
<div class="a" style="left:1187px;top:262px;width:5px;height:80px;background:linear-gradient(90deg,#888,#aaa)"></div>
<div class="t" style="left:847px;top:251px;color:#111;font-size:12px">填充</div>
<div class="a cbtn" style="left:1140px;top:244px;width:47px;height:20px"><svg style="position:absolute;left:17px;top:4px" width="13" height="12" viewBox="0 0 13 12"><path d="M3 2.5 L10 9.5 M10 2.5 L3 9.5" stroke="#6a3020" stroke-width="3.8" stroke-linecap="square"/><path d="M3 2.5 L10 9.5 M10 2.5 L3 9.5" stroke="#fff" stroke-width="2" stroke-linecap="square"/></svg></div>
<div class="a" style="left:845px;top:271px;width:343px;height:72px;background:#dcdcdc;border:1px solid #555;border-bottom:none"></div>
<div class="a" style="left:858px;top:290px;width:247px;height:60px;border:1px solid #bdbdbd;border-bottom:none;box-shadow:inset 1px 1px 0 #fff"></div>
<div class="a" style="left:876px;top:283px;width:32px;height:14px;background:#dcdcdc"></div>
<div class="t" style="left:881px;top:284px;color:#111;letter-spacing:0.5px">内容</div>
<div class="t" style="left:918px;top:309px;color:#111">使用:</div>
<div class="a wdd" style="left:953px;top:306px;width:141px;height:20px"><span>颜色...</span><svg style="position:absolute;right:4px;top:4px" width="7" height="11" viewBox="0 0 7 11"><path d="M0.5 4.5 L3.5 0.5 L6.5 4.5Z M0.5 6.5 L3.5 10.5 L6.5 6.5Z" fill="#1a1a1a"/></svg></div>
<div class="a wbtn def" style="left:1120px;top:289px;width:56px;height:22px"><span>确定</span></div>
<div class="a wbtn" style="left:1121px;top:320px;width:54px;height:22px"><span>取消</span></div>
<div class="a" style="left:957px;top:337px;width:36px;height:4px;border:1px solid #999;border-bottom:none;background:#e8e8e8"></div>

<!-- COLOR PICKER -->
<div class="a" style="left:808px;top:339px;width:546px;height:390px;border-radius:7px 7px 4px 4px;border:1px solid #2a2a2a;box-shadow:0 1px 9px 3px rgba(0,0,0,.65);background:linear-gradient(90deg,#d0d0d0 0%,#c6c6c6 22%,#b4b4b4 38%,#ababab 68%,#8a8a8a 69.5%,#3e3e3e 71%,#5c5c5c 75%,#7a7a7a 86%,#8e8e8e 100%)"></div>
<div class="a" style="left:809px;top:340px;width:544px;height:28px;border-radius:6px 6px 0 0;background:linear-gradient(180deg,rgba(255,255,255,.35),rgba(255,255,255,0) 70%)"></div>
<div class="a" style="left:809px;top:368px;width:5px;height:360px;background:linear-gradient(180deg,transparent 0,transparent 255px,#222 275px),linear-gradient(90deg,#bbb,#e6e6e6 60%,#aaa)"></div>
<div class="a" style="left:808px;top:620px;width:1px;height:109px;background:linear-gradient(180deg,#2a2a2a 0,#2a2a2a 13px,#bdbdbd 20px)"></div>
<div class="a" style="left:813px;top:620px;width:1px;height:104px;background:linear-gradient(180deg,transparent 0,transparent 13px,#d8d8d8 20px)"></div>
<div class="a" style="left:1348px;top:368px;width:5px;height:360px;background:linear-gradient(180deg,transparent 0,transparent 80px,#3a3a3a 170px),linear-gradient(90deg,#999,#e0e0e0 50%,#888)"></div>
<div class="a" style="left:1353px;top:368px;width:1px;height:361px;background:linear-gradient(180deg,#2a2a2a 0,#2a2a2a 100px,#bdbdbd 170px)"></div>
<div class="a" style="left:1348px;top:540px;width:1px;height:184px;background:#c8c8c8"></div>
<div class="a" style="left:809px;top:723px;width:544px;height:5px;background:#232323;border-top:1px solid #d8d8d8"></div>
<div class="a" style="left:808px;top:728px;width:546px;height:1px;background:#c8c8c8;border-radius:0 0 3px 3px"></div>
<div class="t" style="left:815px;top:347px;color:#111;letter-spacing:0.5px">拾色器 ( 填充颜色 )</div>
<div class="a cbtn" style="left:1301px;top:339px;width:47px;height:21px"><svg style="position:absolute;left:17px;top:4.5px" width="13" height="12" viewBox="0 0 13 12"><path d="M3 2.5 L10 9.5 M10 2.5 L3 9.5" stroke="#6a3020" stroke-width="3.8" stroke-linecap="square"/><path d="M3 2.5 L10 9.5 M10 2.5 L3 9.5" stroke="#fff" stroke-width="2" stroke-linecap="square"/></svg></div>
<div class="a" style="left:813px;top:367px;width:536px;height:357px;background:#dcdcdc;border:1px solid #404040"></div>
<!-- color field -->
<div class="a" style="left:825px;top:398px;width:260px;height:260px;background:#b4b4b4"></div>
<div class="a" style="left:827px;top:400px;width:256px;height:256px;background:linear-gradient(180deg,rgba(0,0,0,0),#000),linear-gradient(90deg,#fff,#04fb27)"></div>
<div class="a" style="left:827px;top:400px;width:256px;height:256px;overflow:hidden"><svg class="a" style="left:243.2px;top:-3.3px" width="16" height="16" viewBox="0 0 16 16"><circle cx="8" cy="8" r="5" fill="none" stroke="#111" stroke-width="1.3"/></svg></div>
<!-- hue slider -->
<div class="a" style="left:1096px;top:399px;width:22px;height:258px;background:#b4b4b4"></div>
<div class="a" style="left:1097px;top:400px;width:20px;height:256px;background:linear-gradient(180deg,#f00 0%,#f0f 16.7%,#00f 33.3%,#0ff 50%,#0f0 66.7%,#ff0 83.3%,#f00 100%)"></div>
<svg class="a" style="left:1085px;top:558px" width="44" height="12" viewBox="0 0 44 12"><path d="M1.5 1.5 L7.5 6 L1.5 10.5Z M41.5 1.5 L35.5 6 L41.5 10.5Z" fill="#eee" stroke="#888" stroke-width="1"/></svg>
<!-- new/current -->
<div class="t" style="left:1148px;top:392px;color:#111;letter-spacing:0.5px">新的</div>
<div class="a" style="left:1130px;top:408px;width:60px;height:68px;border:1px solid #111;background:linear-gradient(180deg,#04fb27 0,#04fb27 50%,#0010f0 50%)"></div>
<div class="t" style="left:1148px;top:479px;color:#111;letter-spacing:0.5px">当前</div>
<svg class="a" style="left:1198px;top:409px" width="14" height="13" viewBox="0 0 14 13"><path d="M7 0.5 L13.5 12 H0.5Z" fill="#222"/><path d="M7 4 V8.5 M7 9.8 V11" stroke="#fff" stroke-width="1.6"/></svg>
<div class="a" style="left:1199px;top:424px;width:14px;height:14px;border:1px solid #777;background:#62b23a;box-shadow:inset 0 0 0 1px #e8e8e8"></div>
<svg class="a" style="left:1199px;top:446px" width="14" height="13" viewBox="0 0 14 13"><path d="M7 0.5 L13 3.5 V9.5 L7 12.5 L1 9.5 V3.5Z" fill="#555"/><path d="M1 3.5 L7 6.5 L13 3.5 M7 6.5 V12.5" stroke="#ccc" stroke-width=".9" fill="none"/><path d="M7 0.5 L13 3.5 L7 6.5 L1 3.5Z" fill="#999"/></svg>
<div class="a" style="left:1199px;top:461px;width:14px;height:14px;border:1px solid #777;background:#0ef03c;box-shadow:inset 0 0 0 1px #e8e8e8"></div>
<!-- buttons -->
<div class="a wbtn def" style="left:1234px;top:379px;width:102px;height:22px"><span>确定</span></div>
<div class="a wbtn" style="left:1235px;top:410px;width:100px;height:20px"><span>取消</span></div>
<div class="a wbtn" style="left:1235px;top:447px;width:100px;height:20px"><span>添加到色板</span></div>
<div class="a wbtn" style="left:1235px;top:484px;width:100px;height:20px"><span>颜色库</span></div>
<div class="a rad on" style="left:1130px;top:524px"></div><div class="t" style="left:1150px;top:524px;color:#111">H:</div><div class="a inp" style="left:1173px;top:521px;width:34px;height:21px"><span>128</span></div><div class="t" style="left:1213px;top:524px;color:#111">度</div><div class="a rad" style="left:1130px;top:551px"></div><div class="t" style="left:1150px;top:551px;color:#111">S:</div><div class="a inp" style="left:1173px;top:548px;width:34px;height:21px"><span>98</span></div><div class="t" style="left:1213px;top:551px;color:#111">%</div><div class="a rad" style="left:1130px;top:578px"></div><div class="t" style="left:1150px;top:578px;color:#111">B:</div><div class="a inp" style="left:1173px;top:575px;width:34px;height:21px"><span>98</span></div><div class="t" style="left:1213px;top:578px;color:#111">%</div><div class="a rad" style="left:1240px;top:524px"></div><div class="t" style="left:1259px;top:524px;color:#111">L:</div><div class="a inp" style="left:1280px;top:521px;width:42px;height:21px"><span>87</span></div><div class="a rad" style="left:1240px;top:551px"></div><div class="t" style="left:1259px;top:551px;color:#111">a:</div><div class="a inp" style="left:1280px;top:548px;width:42px;height:21px"><span>-78</span></div><div class="a rad" style="left:1240px;top:578px"></div><div class="t" style="left:1259px;top:578px;color:#111">b:</div><div class="a inp" style="left:1280px;top:575px;width:42px;height:21px"><span>75</span></div><div class="a rad" style="left:1130px;top:609px"></div><div class="t" style="left:1150px;top:609px;color:#111">R:</div><div class="a inp" style="left:1173px;top:606px;width:34px;height:21px"><span>4</span></div><div class="a rad" style="left:1130px;top:636px"></div><div class="t" style="left:1150px;top:636px;color:#111">G:</div><div class="a inp" style="left:1173px;top:633px;width:34px;height:21px"><span>251</span></div><div class="a rad" style="left:1130px;top:663px"></div><div class="t" style="left:1150px;top:663px;color:#111">B:</div><div class="a inp" style="left:1173px;top:660px;width:34px;height:21px"><span>39</span></div><div class="t" style="left:1252px;top:609px;width:22px;text-align:right;color:#111">C:</div><div class="a inp" style="left:1280px;top:606px;width:34px;height:21px"><span>62</span></div><div class="t" style="left:1321px;top:609px;color:#111">%</div><div class="t" style="left:1252px;top:636px;width:22px;text-align:right;color:#111">M:</div><div class="a inp" style="left:1280px;top:633px;width:34px;height:21px"><span>0</span></div><div class="t" style="left:1321px;top:636px;color:#111">%</div><div class="t" style="left:1252px;top:663px;width:22px;text-align:right;color:#111">Y:</div><div class="a inp" style="left:1280px;top:660px;width:34px;height:21px"><span>99</span></div><div class="t" style="left:1321px;top:663px;color:#111">%</div><div class="t" style="left:1252px;top:690px;width:22px;text-align:right;color:#111">K:</div><div class="a inp" style="left:1280px;top:687px;width:34px;height:21px"><span>0</span></div><div class="t" style="left:1321px;top:690px;color:#111">%</div><div class="t" style="left:1131px;top:694px;color:#111">#</div>
<div class="a inp" style="left:1146px;top:690px;width:80px;height:22px;border-color:#7ca0cf"><span style="left:4px">04fb27</span></div>
<div class="a" style="left:1150px;top:694px;width:1px;height:14px;background:#000"></div>
<div class="a" style="left:826px;top:667px;width:14px;height:14px;border:1px solid #8e8e8e;border-radius:2px;background:linear-gradient(#f4f4f4,#e0e0e0)"></div>
<div class="t" style="left:847px;top:666px;color:#111;letter-spacing:0.7px">只有 Web 颜色</div>
<div id="taskbar" class="a"></div>
<div class="a" style="left:0;top:860px;width:1440px;height:40px;background:radial-gradient(ellipse 120px 25px at 260px 38px,rgba(200,200,205,.35),transparent),radial-gradient(ellipse 150px 30px at 780px 30px,rgba(215,215,215,.35),transparent),radial-gradient(ellipse 100px 30px at 520px 10px,rgba(110,115,120,.35),transparent),linear-gradient(180deg,rgba(255,255,255,.08),rgba(0,0,0,.05))"></div>
<div class="a" style="left:0;top:860px;width:1440px;height:1px;background:#262626"></div>
<div class="a" style="left:0;top:861px;width:1440px;height:1px;background:#c9cdd2"></div>
<!-- start orb -->
<div class="a" style="left:9px;top:862px;width:37px;height:37px;border-radius:50%;background:linear-gradient(180deg,#b4cee0 0%,#6a9cc4 45%,#0d5a9a 52%,#0a4f90 70%,#10a0e0 100%);box-shadow:0 0 0 1px #143c6a,0 0 0 2px rgba(200,220,240,.6)"></div>
<svg class="a" style="left:15px;top:868px" width="25" height="24" viewBox="0 0 25 24"><path d="M3.5 3 Q6.5 1.5 10.5 3 L9.5 10.5 Q6 9 2.5 10.5Z" fill="#ec5a24"/><path d="M11.5 3.5 Q16 5.5 21.5 3.5 L20.5 11 Q15.5 13 10.5 11Z" fill="#86c440"/><path d="M2.3 11.5 Q6 10 9.3 11.5 L8.3 19 Q4.8 17.5 1.3 19Z" fill="#28a2e6"/><path d="M10.3 12 Q15 14 20.3 12 L19.3 19.5 Q14.5 21.5 9.3 19.5Z" fill="#fcc020"/></svg>
<div class="a dots" style="left:58px;top:865px;width:11px;height:32px"></div>
<!-- app buttons -->
<div class="a" style="left:76px;top:861px;width:58px;height:38px;border:1px solid #6f7378;border-radius:3px;background:linear-gradient(135deg,#d6d6d6 0%,#c0c0c0 45%,#b4b4b4 100%);box-shadow:inset 0 0 0 1px rgba(255,255,255,.4)"></div>
<div class="a" style="left:90px;top:866px;width:29px;height:29px;border-radius:50%;background:#2aa6e8"></div>
<svg class="a" style="left:90px;top:866px" width="29" height="29" viewBox="0 0 29 29"><circle cx="14.5" cy="14.5" r="6" fill="#fff"/><path d="M5 25 L11 16 L13.5 18.5Z M24.5 4.5 L16 11 L18.5 13.5Z" fill="#fff"/></svg>
<div class="a" style="left:137px;top:861px;width:59px;height:38px;border:1px solid #6f7378;border-radius:3px;background:linear-gradient(135deg,#e4e4e4 0%,#d2d2d2 50%,#c8c8c8 100%);box-shadow:inset 0 0 0 1px rgba(255,255,255,.5)"></div>
<div class="a" style="left:152px;top:865px;width:29px;height:28px;background:#0c1a30;border:2px solid #3fb4ec"></div>
<div class="t" style="left:158px;top:870px;font-size:15px;color:#41b6ee;line-height:16px;-webkit-text-stroke:0.6px #41b6ee">Ps</div>
<!-- right side -->
<div class="a dots" style="left:1038px;top:865px;width:11px;height:32px"></div>
<div class="t" style="left:1052px;top:871px;color:#fff;font-size:12px;text-shadow:0 0 2px #000">桌面</div>
<div class="t" style="left:1083px;top:863px;color:#fff;font-size:11px;font-weight:bold;text-shadow:0 0 2px #000">»</div>
<div class="a dots" style="left:1101px;top:865px;width:11px;height:32px"></div>
<div class="t" style="left:1119px;top:872px;color:#fff;font-family:'Liberation Mono',monospace;font-size:11px;text-shadow:0 0 2px #000">CH</div>
<div class="a" style="left:1140px;top:870px;width:16px;height:16px;border-radius:3px;background:#e8501a;transform:rotate(-8deg)"></div>
<div class="t" style="left:1143px;top:870px;color:#fff;font-size:14px;font-weight:bold;line-height:16px">S</div>
<div class="a" style="left:1162px;top:870px;width:16px;height:16px;border-radius:50%;background:radial-gradient(circle at 40% 35%,#5a7ae8,#10209a 70%);border:1px solid #ccc"></div>
<div class="t" style="left:1166px;top:870px;color:#fff;font-size:11px;font-weight:bold;line-height:16px">?</div>
<svg class="a" style="left:1186px;top:867px" width="12" height="20" viewBox="0 0 12 20"><rect x="4" y="1" width="7" height="5" fill="none" stroke="#fff" stroke-width="1.2"/><rect x="1" y="4" width="7" height="5" fill="#8890a0" stroke="#fff" stroke-width="1.2"/><path d="M2 14 h8 l-4 4Z" fill="#fff"/></svg>
<div class="a" style="left:1206px;top:873px;width:16px;height:16px;border-radius:2px;background:#2f9ae8"></div>
<svg class="a" style="left:1206px;top:874px" width="16" height="14" viewBox="0 0 16 14"><path d="M2 6 Q8 1 14 6" fill="none" stroke="#fff" stroke-width="1.6"/><path d="M4.5 8.5 Q8 5.5 11.5 8.5" fill="none" stroke="#fff" stroke-width="1.6"/><circle cx="8" cy="11" r="1.3" fill="#fff"/></svg>
<svg class="a" style="left:1229px;top:871px" width="17" height="19" viewBox="0 0 17 19"><path d="M8.5 1 L16 4 V10 Q15 16 8.5 18 Q2 16 1 10 V4Z" fill="#3aa040" stroke="#e8e8e8" stroke-width="1.4"/><path d="M9 4 L5 10 H8 L7 15 L12 8 H9Z" fill="#e8f070"/></svg>
<div class="a" style="left:1253px;top:872px;width:17px;height:17px;border-radius:50%;background:#2a8a2a"></div>
<div class="a" style="left:1254px;top:873px;width:15px;height:15px;border-radius:50%;background:#e8e020"></div>
<div class="t" style="left:1256px;top:871px;color:#1a5a1a;font-size:15px;font-weight:bold;line-height:16px">+</div>
<svg class="a" style="left:1278px;top:874px" width="17" height="16" viewBox="0 0 17 16"><path d="M1 7 L4 3 H15 L16 7 V11 H1Z" fill="#c8c8c8" stroke="#888" stroke-width=".6"/><path d="M5 10 L8 14 L15 5" fill="none" stroke="#30c040" stroke-width="2.2"/></svg>
<svg class="a" style="left:1302px;top:874px" width="17" height="14" viewBox="0 0 17 14"><g fill="#fff" stroke="#333" stroke-width=".6"><rect x="1" y="10" width="2.5" height="3"/><rect x="4.5" y="8" width="2.5" height="5"/><rect x="8" y="6" width="2.5" height="7"/><rect x="11.5" y="3" width="2.5" height="10"/><rect x="14.5" y="1" width="2" height="12"/></g></svg>
<svg class="a" style="left:1325px;top:872px" width="17" height="17" viewBox="0 0 17 17"><path d="M1 6 H4 L8.5 1.5 V15.5 L4 11 H1Z" fill="#fff" stroke="#444" stroke-width=".6"/><path d="M11 5 Q13 8.5 11 12 M13.5 3 Q16.5 8.5 13.5 14" fill="none" stroke="#fff" stroke-width="1.3"/></svg>
<div class="t" style="left:1375px;top:865px;color:#fff;font-size:12px;text-shadow:0 0 3px rgba(0,0,0,.6)">9:43</div>
<div class="t" style="left:1358px;top:882px;color:#fff;font-size:12px;text-shadow:0 0 3px rgba(0,0,0,.6)">2015/9/14</div>
<div class="a" style="left:1426px;top:861px;width:14px;height:39px;border:1px solid #7a7e84;border-right:none;background:linear-gradient(90deg,#9ea2a6,#b8bcc0)"></div>

</body></html>
